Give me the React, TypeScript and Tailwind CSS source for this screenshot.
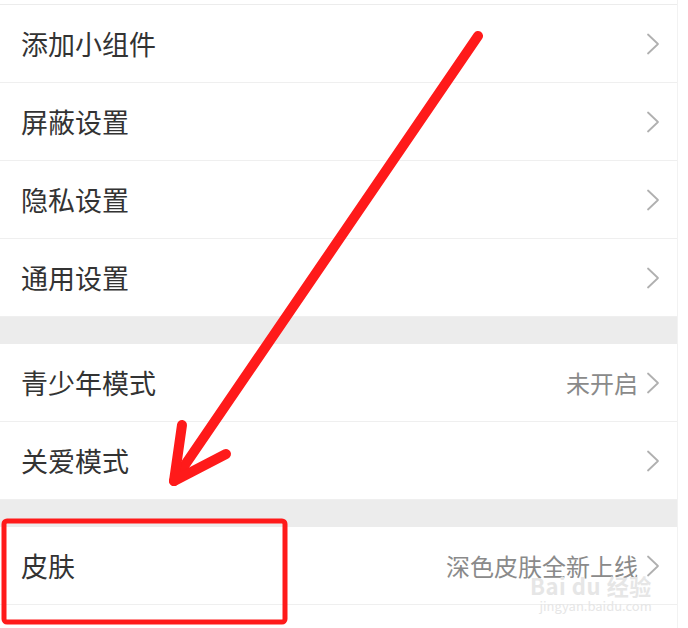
import React from "react";

type Row = { label: string; value?: string };

const GROUPS: Row[][] = [
  [
    { label: "添加小组件" },
    { label: "屏蔽设置" },
    { label: "隐私设置" },
    { label: "通用设置" },
  ],
  [{ label: "青少年模式", value: "未开启" }, { label: "关爱模式" }],
  [{ label: "皮肤", value: "深色皮肤全新上线" }],
];

function Chevron() {
  return (
    <svg width="14" height="22" viewBox="0 0 14 22" className="shrink-0">
      <path d="M2 1.5 L12 11 L2 20.5" fill="none" stroke="#b0b0b0" strokeWidth="1.8" strokeLinecap="round" strokeLinejoin="round" />
    </svg>
  );
}

function SettingRow({ row }: { row: Row }) {
  return (
    <div className="flex h-[78px] items-center justify-between border-b border-[#efefef] pl-[21px] pr-[17px]">
      <span className="text-[27px] leading-none text-[#333333]">{row.label}</span>
      <div className="flex items-center gap-[8px]">
        {row.value && <span className="text-[24px] leading-none text-[#8a8a8a]">{row.value}</span>}
        <Chevron />
      </div>
    </div>
  );
}

export default function App() {
  return (
    <div
      className="relative h-[628px] w-[688px] overflow-hidden bg-white"
      style={{ fontFamily: '"Noto Sans CJK SC", "Noto Sans", sans-serif' }}
    >
      <div className="w-[678px] border-r border-[#f2f2f2] pt-[4px]">
        <div className="border-t border-[#ececec]" />
        {GROUPS.map((group, gi) => (
          <div key={gi}>
            {gi > 0 && <div className="h-[27px] bg-[#ececec]" />}
            {group.map((row) => (
              <SettingRow key={row.label} row={row} />
            ))}
          </div>
        ))}
        <div className="h-[30px]" />
      </div>

      {/* watermark */}
      <div className="pointer-events-none absolute left-[530px] top-[574px] flex flex-col items-end leading-none text-[#e6e6e6]">
        <span className="text-[22px] font-bold tracking-wide">Bai du 经验</span>
        <span className="mt-[3px] text-[13px]">jingyan.baidu.com</span>
      </div>

      {/* annotation: arrow + box */}
      <svg className="pointer-events-none absolute inset-0" width="688" height="628" viewBox="0 0 688 628">
        <g fill="none" stroke="#ff1a1a" strokeLinecap="round" strokeLinejoin="round">
          <path d="M478 36 L174 481" strokeWidth="10" />
          <path d="M182 425 L174 481 L226 454" strokeWidth="10" />
          <rect x="4" y="521" width="281" height="101" rx="3" strokeWidth="5" />
        </g>
      </svg>
    </div>
  );
}
